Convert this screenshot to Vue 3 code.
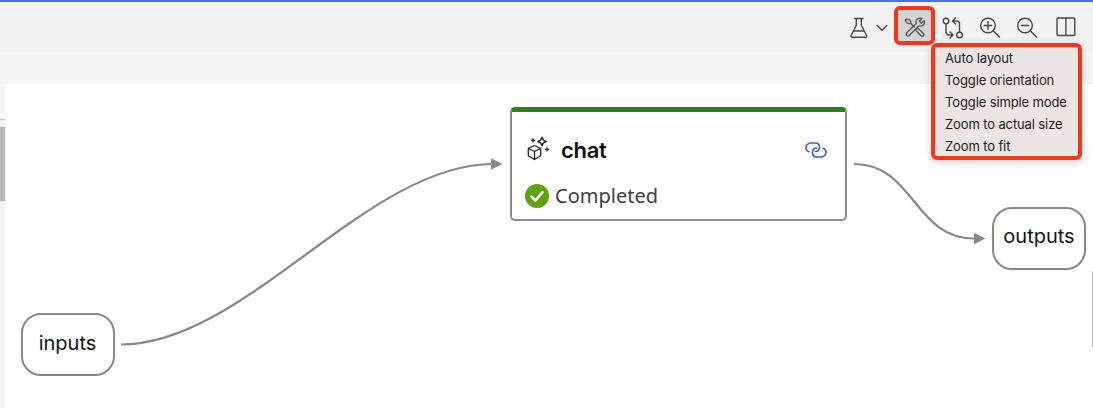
<script setup>
const menuItems = [
  'Auto layout',
  'Toggle orientation',
  'Toggle simple mode',
  'Zoom to actual size',
  'Zoom to fit',
]
</script>

<template>
  <div class="page">
    <header class="toolbar">
      <button class="tool flask" aria-label="Experiments">
        <svg width="20" height="22" viewBox="0 0 20 22">
          <path d="M5.700 1.500h8.300M7.300 1.500v6.700L2.100 18.500q-.6 1.700 1 1.700h13.400q1.600 0 1-1.700L12.300 8.200V1.500M4.700 14h10.300" />
        </svg>
      </button>
      <svg class="chevron" width="12" height="8" viewBox="0 0 12 8"><path d="M1.200 1.500 6 6.300l4.800-4.800" /></svg>
      <button class="tool active" aria-label="Tools">
        <svg width="24" height="24" viewBox="0 0 24 24">
          <path d="M2.300 4.500q.2 3.300 3.300 4.100 1.600.2 2.200-.2.600-1.500-.8-3Q5 3.800 2.300 4.500zM7.800 8.500l3.500 3.500M13.800 13.800l1.400-.2 5.300 4.900q1 1.300-.1 2.400-1.200 1-2.500-.1l-5-5.200.2-1.300zM21.200 5.700 18.500 8.300l-2.200-2.100 2.600-2.700Q15.200 2.200 13.400 5q-.8 1.500-.2 3.500L3.500 18q-1 1.400.2 2.500 1.200 1 2.500 0l9.600-9.600q3.600.8 5.300-1.800.8-1.800.1-3.400z" />
        </svg>
      </button>
      <button class="tool compare" aria-label="Orientation">
        <svg width="22" height="22" viewBox="0 0 22 22">
          <circle cx="4" cy="4" r="2.800" /><circle cx="17.500" cy="18" r="2.800" />
          <path d="M4 7v8q0 3 3 3h3.500M8 15l3 3-3 3M17.500 15V7q0-3-3-3H11M13.500 1l-3 3 3 3" />
        </svg>
      </button>
      <button class="tool zoom-in" aria-label="Zoom in">
        <svg width="22" height="22" viewBox="0 0 22 22"><circle cx="9" cy="8.500" r="7.300" /><path d="m14.200 13.700 6.300 6.300M5.300 8.500h7.400M9 4.800v7.400" /></svg>
      </button>
      <button class="tool zoom-out" aria-label="Zoom out">
        <svg width="22" height="22" viewBox="0 0 22 22"><circle cx="9" cy="8.500" r="7.300" /><path d="m14.200 13.700 6.300 6.300M5.300 8.500h7.400" /></svg>
      </button>
      <button class="tool split" aria-label="Split view">
        <svg width="20" height="20" viewBox="0 0 20 20"><rect x="1" y="1" width="17.800" height="17.500" rx="1" /><path d="M9.900 1v17.500" /></svg>
      </button>
    </header>

    <div class="workspace">
      <aside class="rail"><div class="rail-line"></div><div class="rail-thumb"></div></aside>
      <main class="canvas">
        <svg class="edges" width="1088" height="324" viewBox="5 84 1088 324">
          <path d="M121 344.500C245 344.500 367 164 493 164M854 164C914 164 914 238.500 974 238.500" />
          <path class="arrow" d="m491 158.300 11.500 5.700-11.500 5.700zM974 232.800l11.500 5.700-11.500 5.700z" />
        </svg>
        <div class="node inputs"><span>inputs</span></div>
        <div class="node outputs"><span>outputs</span></div>
        <article class="card">
          <div class="card-head">
            <svg class="llm" width="24" height="26" viewBox="0 0 24 26">
              <path d="m8.500 10.500 6.200 3v7.200l-6.200 3.800-6.200-3.800v-7.200zM2.300 13.500l6.200 3 6.200-3M8.500 16.500v8M16 2.200q.8 3.500 4.200 4.300-3.400.8-4.200 4.300-.8-3.500-4.200-4.300 3.400-.8 4.200-4.300zM7 3.700v3.400M5.300 5.400h3.400M21 12.600V16M19.300 14.300h3.400" />
            </svg>
            <h2>chat</h2>
            <svg class="link" width="24" height="18" viewBox="0 0 24 18">
              <path d="M5 10.700Q2 10 2 6.500T6.500 2h4.700q4.300 0 4.300 4.200t-4.300 4.300M19 7.200q3 .8 3 4.200T17.500 16h-4.700q-4.300 0-4.300-4.500t4.300-4.500" />
            </svg>
          </div>
          <div class="status">
            <svg width="24" height="24" viewBox="0 0 24 24"><circle cx="12" cy="12" r="12" /><path d="m6.500 12.700 4 3.800 7-8.300" /></svg>
            <span>Completed</span>
          </div>
        </article>
        <div class="scroll"></div>
      </main>
    </div>

    <ul class="menu">
      <li v-for="item in menuItems" :key="item">{{ item }}</li>
    </ul>
  </div>
</template>

<style>
body { margin: 0; }
</style>

<style scoped>
* { box-sizing: border-box; }
.page { position: relative; width: 1093px; height: 408px; overflow: hidden; background: #f5f5f5; font-family: Inter, sans-serif; color: #111; }
.toolbar { height: 52px; border-top: 2px solid #4b6bfb; background: #f2f2f2; display: flex; align-items: flex-start; justify-content: flex-end; padding: 4px 17px 0 0; }
.tool { border: 0; padding: 0; background: none; display: flex; align-items: center; justify-content: center; height: 39px; }
svg { display: block; fill: none; stroke: #484848; stroke-width: 1.4; stroke-linecap: round; stroke-linejoin: round; }
.flask { width: 20px; height: 43px; }
.chevron { margin: 18px 6px 0 7px; }
.active { width: 41px; border: 4px solid #f2371b; border-radius: 6px; background: #d4d4d4; }
.active svg { stroke: #5c5c5c; margin-top: 2px; }
.compare { width: 22px; height: 43px; margin-left: 7px; }
.zoom-in { width: 22px; height: 43px; margin-left: 15px; }
.zoom-out { width: 22px; height: 43px; margin-left: 15px; }
.split { width: 20px; height: 42px; margin-left: 18px; }
.workspace { display: flex; height: 356px; padding-top: 32px; }
.rail { width: 5px; flex: none; padding-top: 35px; }
.rail-line { height: 1px; background: #c4c4c4; }
.rail-thumb { height: 74px; margin-top: 7px; background: #bababa; }
.canvas { position: relative; flex: 1; background: #fff; }
.edges { position: absolute; inset: 0; stroke: #888; stroke-width: 2.2; stroke-linecap: butt; }
.edges .arrow { fill: #888; stroke: none; }
.node { position: absolute; width: 94px; height: 63px; border: 2.400px solid #888; border-radius: 20px; background: #fff; display: flex; align-items: center; justify-content: center; font-size: 20px; line-height: 24px; padding-bottom: 4px; }
.inputs { left: 15.500px; top: 229px; }
.outputs { left: 987px; top: 122.500px; }
.card { position: absolute; left: 505px; top: 23px; width: 337px; height: 114px; border: 2px solid #8b8b8b; border-top: 5px solid #2d8014; border-radius: 5px; padding: 23px 17.500px 0 13px; background: #fff; }
.card-head { display: flex; height: 30px; align-items: center; }
.llm { stroke-width: 1.300; stroke: #222; margin: -5px 0 0 1px; }
.card h2 { margin: 0 0 0 11px; font-size: 22px; line-height: 30px; font-weight: 600; letter-spacing: -.3px; }
.link { margin-left: auto; stroke: #3467bd; stroke-width: 1.600; }
.status { display: flex; align-items: center; height: 30px; margin-top: 16px; font: 20px/30px "Noto Sans", sans-serif; color: #404040; }
.status circle { fill: #5da40b; stroke: none; }
.status path { stroke: #fff; stroke-width: 2.600; }
.status span { margin-left: 6px; }
.scroll { position: absolute; right: 0; top: 187px; width: 1px; height: 76px; background: #bbb; }
.menu { position: absolute; left: 931px; top: 43px; width: 151px; height: 117px; margin: 0; padding: 0 0 0 10px; list-style: none; border: 4px solid #f2371b; border-radius: 6px; background: #ebe6e4; box-shadow: 0 2px 8px #0003; font-size: 13px; letter-spacing: -.12px; line-height: 22px; color: #222; }
.menu li { height: 22px; white-space: nowrap; }
</style>
